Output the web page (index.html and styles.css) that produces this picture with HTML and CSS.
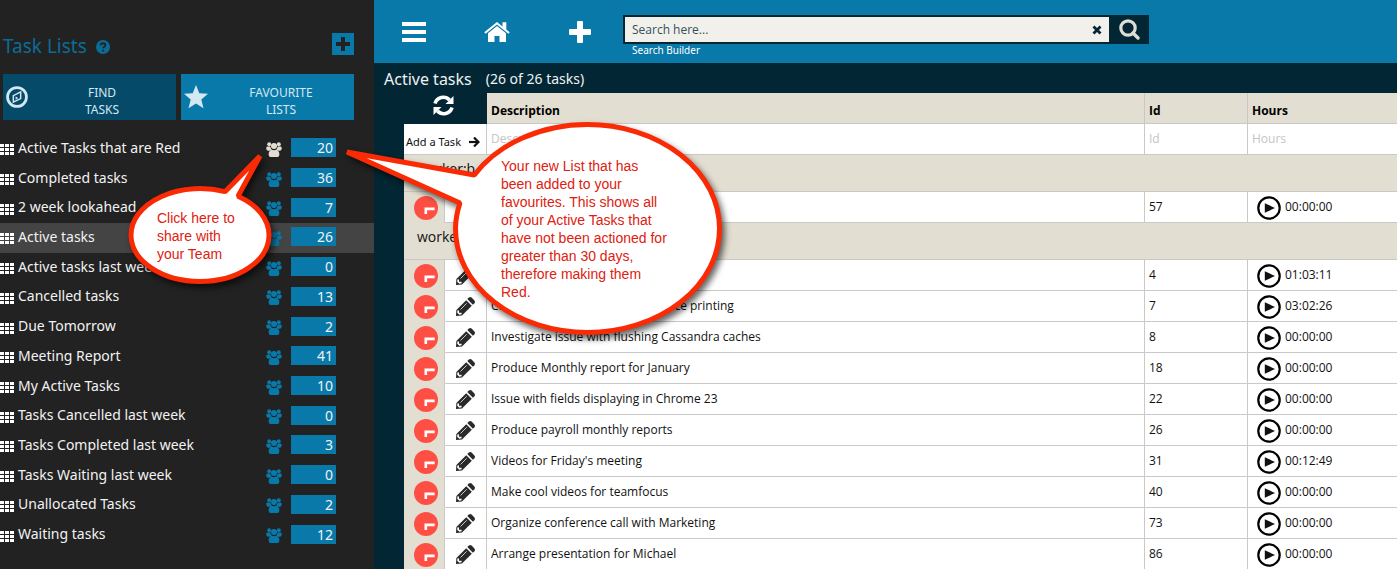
FILE: index.html
```html
<!DOCTYPE html>
<html lang="en">
<head>
<meta charset="utf-8">
<title>Task Lists</title>
<link rel="stylesheet" href="styles.css">
</head>
<body>
<svg class="defs" aria-hidden="true">
  <symbol id="grid" viewBox="0 0 14 11"><path d="M0 0h4v3H0zM5 0h4v3H5zM10 0h4v3h-4zM0 4h4v3H0zM5 4h4v3H5zM10 4h4v3h-4zM0 8h4v3H0zM5 8h4v3H5zM10 8h4v3h-4z"/></symbol>
  <symbol id="team" viewBox="0 0 16 15"><circle cx="3.2" cy="2.2" r="2"/><circle cx="12.8" cy="2.2" r="2"/><circle cx="8" cy="4" r="3"/><path d="M1.8 4.6h2.4q.6 2.6 2 3.2-1.800.2-2.800.9H1.700Q0 7.500.2 6q.2-1.400 1.600-1.400zM14.200 4.600h-2.400q-.6 2.600-2 3.200 1.800.2 2.800.9h1.700q1.700-1.200 1.500-2.700-.2-1.400-1.600-1.400zM5.800 7.800q2.200.9 4.400 0 3 .6 3.200 4.400 0 2.500-1.700 2.700H4.300q-1.700-.2-1.700-2.700.2-3.800 3.200-4.400z"/></symbol>
  <symbol id="late" viewBox="0 0 24 24"><circle cx="12" cy="12" r="12" fill="#ff4f44"/><path d="M11.800 18v-5.100h8.900" fill="none" stroke="#fff" stroke-width="2.600"/></symbol>
  <symbol id="pencil" viewBox="0 0 19 19"><path d="M0 19l.4-6L10.200 3.200l5.600 5.600L6 18.600z"/><path d="M11.300 2.100l1.500-1.500q1.400-1.200 2.800 0l2.800 2.800q1.200 1.400 0 2.800l-1.500 1.500z"/><path d="M4.500 12.500l6.200-6.200" stroke="#ddd" stroke-width=".9"/><path d="M1.200 15.800l.3-2.600 1.500.2v2.400h2.500l.2 1.500-2.400.5z" fill="#fff"/></symbol>
  <symbol id="play" viewBox="0 0 24 24"><circle cx="12" cy="12" r="10.700" fill="none" stroke="#000" stroke-width="2.200"/><path d="M7.800 7.200l10.200 4.800-10.200 4.800z"/></symbol>
</svg>

<div class="app">
  <aside class="sidebar">
    <header class="side-head">
      <h1>Task Lists</h1>
      <svg class="help" viewBox="0 0 14 14" aria-hidden="true"><circle cx="7" cy="7" r="7"/><path d="M4.600 5.400q.2-2.200 2.500-2.200t2.400 1.900q0 1.100-1.300 1.800-1 .5-1 1.400M7.200 9.700v1.800" fill="none" stroke="#222" stroke-width="1.900"/></svg>
      <button class="add-list" aria-label="Add list"><svg viewBox="0 0 14 14"><path d="M5 0h4v5h5v4H9v5H5V9H0V5h5z"/></svg></button>
    </header>
    <nav class="tabs">
      <button class="tab find"><svg viewBox="0 0 24 24" aria-hidden="true"><circle cx="12" cy="12" r="10.300" fill="none" stroke="currentColor" stroke-width="3"/><path d="M16 6.500v7.300L8 17.500v-7z" fill="none" stroke="currentColor" stroke-width="1.600"/><path d="M10.500 11.500l2.800 1.700-2.800 1.700z"/></svg><span>FIND<br>TASKS</span></button>
      <button class="tab fav"><svg viewBox="0 0 24 24" aria-hidden="true"><path d="M12 0l3.300 8.200 8.700.6-6.700 5.600 2.200 8.800L12 18.400l-7.500 4.800 2.200-8.800L0 8.800l8.700-.6z"/></svg><span>FAVOURITE<br>LISTS</span></button>
    </nav>
    <ul class="lists">
      <li class="fresh"><svg class="grip"><use href="#grid"/></svg><a href="#">Active Tasks that are Red</a><svg class="team"><use href="#team"/></svg><span class="count">20</span></li>
      <li><svg class="grip"><use href="#grid"/></svg><a href="#">Completed tasks</a><svg class="team"><use href="#team"/></svg><span class="count">36</span></li>
      <li><svg class="grip"><use href="#grid"/></svg><a href="#">2 week lookahead</a><svg class="team"><use href="#team"/></svg><span class="count">7</span></li>
      <li class="current"><svg class="grip"><use href="#grid"/></svg><a href="#">Active tasks</a><svg class="team"><use href="#team"/></svg><span class="count">26</span></li>
      <li><svg class="grip"><use href="#grid"/></svg><a href="#">Active tasks last week</a><svg class="team"><use href="#team"/></svg><span class="count">0</span></li>
      <li><svg class="grip"><use href="#grid"/></svg><a href="#">Cancelled tasks</a><svg class="team"><use href="#team"/></svg><span class="count">13</span></li>
      <li><svg class="grip"><use href="#grid"/></svg><a href="#">Due Tomorrow</a><svg class="team"><use href="#team"/></svg><span class="count">2</span></li>
      <li><svg class="grip"><use href="#grid"/></svg><a href="#">Meeting Report</a><svg class="team"><use href="#team"/></svg><span class="count">41</span></li>
      <li><svg class="grip"><use href="#grid"/></svg><a href="#">My Active Tasks</a><svg class="team"><use href="#team"/></svg><span class="count">10</span></li>
      <li><svg class="grip"><use href="#grid"/></svg><a href="#">Tasks Cancelled last week</a><svg class="team"><use href="#team"/></svg><span class="count">0</span></li>
      <li><svg class="grip"><use href="#grid"/></svg><a href="#">Tasks Completed last week</a><svg class="team"><use href="#team"/></svg><span class="count">3</span></li>
      <li><svg class="grip"><use href="#grid"/></svg><a href="#">Tasks Waiting last week</a><svg class="team"><use href="#team"/></svg><span class="count">0</span></li>
      <li><svg class="grip"><use href="#grid"/></svg><a href="#">Unallocated Tasks</a><svg class="team"><use href="#team"/></svg><span class="count">2</span></li>
      <li><svg class="grip"><use href="#grid"/></svg><a href="#">Waiting tasks</a><svg class="team"><use href="#team"/></svg><span class="count">12</span></li>
    </ul>
  </aside>

  <main class="main">
    <header class="topbar">
      <nav class="tools">
        <button aria-label="Menu"><svg viewBox="0 0 24 24"><path d="M0 2h24v4H0zM0 10h24v4H0zM0 18h24v4H0z"/></svg></button>
        <button aria-label="Home"><svg viewBox="0 0 26 24"><path d="M13 2L.300 12.300l1.300 1.400L13 4.500l11.400 9.200 1.300-1.400-3.400-2.800V2.200h-3.800v4.200z"/><path d="M13 6l9 7.200V22h-6.500v-6h-5v6H4v-8.800z"/></svg></button>
        <button aria-label="Add"><svg viewBox="0 0 24 24"><path d="M10 1h4q1 0 1 1v7h7q1 0 1 1v4q0 1-1 1h-7v7q0 1-1 1h-4q-1 0-1-1v-7H2q-1 0-1-1v-4q0-1 1-1h7V2q0-1 1-1z"/></svg></button>
      </nav>
      <form class="search">
        <div class="search-box">
          <input type="text" placeholder="Search here..." aria-label="Search">
          <button type="button" class="clear" aria-label="Clear"><svg viewBox="0 0 10 10"><path d="M1.500 1.500l7 7M8.500 1.500l-7 7" fill="none" stroke="#022633" stroke-width="2.800"/></svg></button>
          <button type="button" class="go" aria-label="Search"><svg viewBox="0 0 21 21"><circle cx="9" cy="9" r="7.200" fill="none" stroke="#dfddd5" stroke-width="3.200"/><path d="M14 14l5 5" stroke="#dfddd5" stroke-width="3.400" stroke-linecap="round"/></svg></button>
        </div>
        <a class="builder" href="#">Search Builder</a>
      </form>
    </header>
    <div class="heading"><h2>Active tasks</h2><span>(26 of 26 tasks)</span></div>
    <table class="tasks">
      <colgroup><col class="c-state"><col class="c-edit"><col><col class="c-id"><col class="c-hours"></colgroup>
      <thead>
        <tr class="head"><td class="refresh" colspan="2"><button aria-label="Refresh"><svg viewBox="0 0 21 21"><path d="M2 8.500A8.600 8.600 0 0 1 16.500 5" fill="none" stroke="#fff" stroke-width="3.600"/><path d="M20.500 1v8h-8z"/><path d="M19 12.500A8.600 8.600 0 0 1 4.500 16" fill="none" stroke="#fff" stroke-width="3.600"/><path d="M.500 20v-8h8z"/></svg></button></td><th>Description</th><th>Id</th><th>Hours</th></tr>
        <tr class="new"><td colspan="2" class="add"><button>Add a Task <svg viewBox="0 0 11 10"><path d="M0 5h8" stroke="#111" stroke-width="2.200"/><path d="M5 .5L9.500 5 5 9.500" fill="none" stroke="#111" stroke-width="2.200"/></svg></button></td><td><input type="text" placeholder="Description" aria-label="Description"></td><td><input type="text" placeholder="Id" aria-label="Id"></td><td><input type="text" placeholder="Hours" aria-label="Hours"></td></tr>
      </thead>
      <tbody>
        <tr class="group"><td colspan="5">worker:b</td></tr>
        <tr><td class="state"><svg><use href="#late"/></svg></td><td class="edit"></td><td></td><td>57</td><td class="hours"><svg><use href="#play"/></svg>00:00:00</td></tr>
        <tr class="group"><td colspan="5">worker</td></tr>
        <tr><td class="state"><svg><use href="#late"/></svg></td><td class="edit"><svg><use href="#pencil"/></svg></td><td></td><td>4</td><td class="hours"><svg><use href="#play"/></svg>01:03:11</td></tr>
        <tr><td class="state"><svg><use href="#late"/></svg></td><td class="edit"><svg><use href="#pencil"/></svg></td><td>Customer has an issue with invoice printing</td><td>7</td><td class="hours"><svg><use href="#play"/></svg>03:02:26</td></tr>
        <tr><td class="state"><svg><use href="#late"/></svg></td><td class="edit"><svg><use href="#pencil"/></svg></td><td>Investigate issue with flushing Cassandra caches</td><td>8</td><td class="hours"><svg><use href="#play"/></svg>00:00:00</td></tr>
        <tr><td class="state"><svg><use href="#late"/></svg></td><td class="edit"><svg><use href="#pencil"/></svg></td><td>Produce Monthly report for January</td><td>18</td><td class="hours"><svg><use href="#play"/></svg>00:00:00</td></tr>
        <tr><td class="state"><svg><use href="#late"/></svg></td><td class="edit"><svg><use href="#pencil"/></svg></td><td>Issue with fields displaying in Chrome 23</td><td>22</td><td class="hours"><svg><use href="#play"/></svg>00:00:00</td></tr>
        <tr><td class="state"><svg><use href="#late"/></svg></td><td class="edit"><svg><use href="#pencil"/></svg></td><td>Produce payroll monthly reports</td><td>26</td><td class="hours"><svg><use href="#play"/></svg>00:00:00</td></tr>
        <tr><td class="state"><svg><use href="#late"/></svg></td><td class="edit"><svg><use href="#pencil"/></svg></td><td>Videos for Friday's meeting</td><td>31</td><td class="hours"><svg><use href="#play"/></svg>00:12:49</td></tr>
        <tr><td class="state"><svg><use href="#late"/></svg></td><td class="edit"><svg><use href="#pencil"/></svg></td><td>Make cool videos for teamfocus</td><td>40</td><td class="hours"><svg><use href="#play"/></svg>00:00:00</td></tr>
        <tr><td class="state"><svg><use href="#late"/></svg></td><td class="edit"><svg><use href="#pencil"/></svg></td><td>Organize conference call with Marketing</td><td>73</td><td class="hours"><svg><use href="#play"/></svg>00:00:00</td></tr>
        <tr><td class="state"><svg><use href="#late"/></svg></td><td class="edit"><svg><use href="#pencil"/></svg></td><td>Arrange presentation for Michael</td><td>86</td><td class="hours"><svg><use href="#play"/></svg>00:00:00</td></tr>
      </tbody>
    </table>
  </main>
</div>

<div class="callout share">
  <svg viewBox="125 150 155 145" aria-hidden="true"><path d="M225 191.700L260 156 238 196.200A69 46.500 0 0 1 269 235A69 46.500 0 0 1 200 281.500A69 46.500 0 0 1 131 235A69 46.500 0 0 1 225 191.700z"/></svg>
  <p>Click here to<br>share with<br>your Team</p>
</div>
<div class="callout added">
  <svg viewBox="340 115 395 235" aria-hidden="true"><path d="M460 203L347 152 474.300 175A132 104 0 0 1 587.500 124.500A132 104 0 0 1 719.500 228.500A132 104 0 0 1 587.500 332.500A132 104 0 0 1 455.500 228.500A132 104 0 0 1 460 203z"/></svg>
  <p>Your new List that has<br>been added to your<br>favourites. This shows all<br>of your Active Tasks that<br>have not been actioned for<br>greater than 30 days,<br>therefore making them<br>Red.</p>
</div>
</body>
</html>
```
FILE: styles.css
```css
* { box-sizing: border-box; }
body {
  margin: 0;
  height: 100vh;
  overflow: hidden;
  font: 12px/18px "Open Sans", "Noto Sans", sans-serif;
  color: #111;
  background: #022633;
}
h1, h2, p, ul { margin: 0; padding: 0; font-weight: 400; }
button { border: 0; padding: 0; background: none; font: inherit; color: inherit; cursor: pointer; }
button svg { display: block; }
svg { fill: currentColor; }
a { color: inherit; text-decoration: none; }
.defs { display: none; }

.app { display: flex; min-height: 100vh; }
.sidebar { flex: 0 0 374px; background: #222; color: #f2f2f2; font-family: "Noto Sans", "Open Sans", sans-serif; }
.side-head { display: flex; align-items: flex-start; height: 58px; padding: 33px 20px 0 3px; color: #0b6c97; }
.side-head h1 { font-size: 19px; line-height: 26px; }
.help { width: 14px; height: 14px; margin: 7px 0 0 9px; }
.add-list { display: grid; place-items: center; width: 22px; height: 22px; margin-left: auto; background: #0979aa; color: #222; }
.add-list svg { width: 14px; height: 14px; }
.tabs { display: grid; grid-template-columns: 1fr 1fr; gap: 5px; padding: 16px 20px 0 3px; }
.tab { display: flex; align-items: center; height: 46px; padding: 0 3px; color: #d3e8f1; line-height: 17px; }
.tab svg { flex: none; width: 24px; height: 24px; }
.tab span { flex: 1; padding: 8px 0 0 3px; }
.find { background: #054b69; }
.tab.find svg { width: 22px; height: 22px; }
.fav { background: #0979aa; }

.lists { display: grid; grid-auto-rows: 1fr; height: 416px; margin-top: 14px; list-style: none; font-size: 14px; }
.lists li { display: flex; align-items: center; padding: 0 38px 2px 0; }
.lists a { flex: 1; margin-left: 4px; }
.grip { width: 14px; height: 11px; margin-top: 4px; color: #fff; }
.team { width: 16px; height: 15px; margin: 3px 9px 0 0; color: #0979aa; }
.fresh .team { color: #e2ded1; }
.current { background: #444; }
.count { width: 45px; padding-right: 3px; background: #0979aa; line-height: 19px; text-align: right; }

.main { flex: 1; min-width: 0; }
.topbar { display: flex; align-items: flex-start; height: 63px; background: #0979aa; color: #fff; }
.tools { display: flex; gap: 57px; padding: 20px 0 0 27px; }
.tools svg { width: 26px; height: 24px; }
.search { width: 526px; margin: 15px 0 0 30px; }
.search-box { display: flex; height: 29px; padding: 2px 0; border-left: 2px solid #022633; background: #022633; }
.search input { flex: 1; min-width: 0; border: 0; padding: 0 7px; background: #f2f0eb; font: inherit; outline: 0; }
.search input::placeholder { color: #35515c; opacity: 1; }
.clear { width: 25px; background: #f2f0eb; }
.clear svg { width: 10px; height: 10px; margin: 0 auto; }
.go { width: 40px; }
.go svg { width: 21px; height: 21px; margin: 0 auto; }
.builder { display: block; width: max-content; margin-left: 9px; font: 10px/13px "Noto Sans", "Open Sans", sans-serif; }
.heading { display: flex; align-items: center; gap: 14px; height: 30px; padding: 2px 10px 0; color: #eef2f3; font: 14px/20px "Noto Sans", "Open Sans", sans-serif; }
.heading h2 { font-size: 16px; }

.tasks { width: calc(100% - 30px); margin-left: 30px; table-layout: fixed; border-collapse: separate; border-spacing: 0; background: #fff; }
.c-state { width: 41px; }
.c-edit { width: 42px; }
.c-id { width: 103px; }
.c-hours { width: 149px; }
.tasks td, .tasks th { height: 31px; padding: 0 4px; border: solid #c9c9c9; border-width: 0 1px 1px 0; text-align: left; }
.tasks tr > :last-child { border-right: 0; }
.tasks th { background: #e2ded1; padding-top: 5px; color: #000; font-weight: 700; }
.tasks .refresh { background: #022633; border-color: #022633; color: #fff; }
.refresh button { display: block; margin: 0 auto 6px 25px; }
.refresh svg { width: 21px; height: 21px; }
.tasks .add { padding: 6px 0 0 2px; font-family: "Noto Sans", "Open Sans", sans-serif; font-size: 11px; }
.add button { display: flex; align-items: center; gap: 8px; }
.add svg { width: 11px; height: 10px; }
.tasks input { width: 100%; border: 0; padding: 0; background: none; font: inherit; outline: 0; }
.tasks input::placeholder { color: #c4c4c4; opacity: 1; }
.tasks .group td { height: 37px; padding: 0 13px 8px; background: #e2ded1; font-size: 14px; }
.tasks .state { background: #e2ded1; padding: 1px 0 0 10px; border-bottom-color: #e2ded1; }
.state svg, .hours svg { display: block; width: 24px; height: 24px; }
.tasks .edit { padding: 0 0 0 11px; color: #2a2a2a; }
.edit svg { display: block; width: 19px; height: 19px; }
.tasks .hours { padding-top: 1px; }
.hours svg { display: inline-block; vertical-align: middle; margin: 0 4px 0 5px; }

/* Help bubbles float over the application */
.callout { position: absolute; color: #e0200f; font: 14px/18px "Liberation Sans", Arial, sans-serif; white-space: nowrap; }
.callout svg { display: block; width: 100%; overflow: visible; fill: #fff; stroke: #fa2a05; stroke-width: 5; stroke-linejoin: bevel; filter: drop-shadow(3px 4px 3px rgba(0, 0, 0, .6)); }
.callout p { position: absolute; }
.share { left: 125px; top: 150px; width: 155px; }
.share p { left: 32px; top: 59px; }
.added { left: 340px; top: 115px; width: 395px; }
.added p { left: 161px; top: 42px; }
```
